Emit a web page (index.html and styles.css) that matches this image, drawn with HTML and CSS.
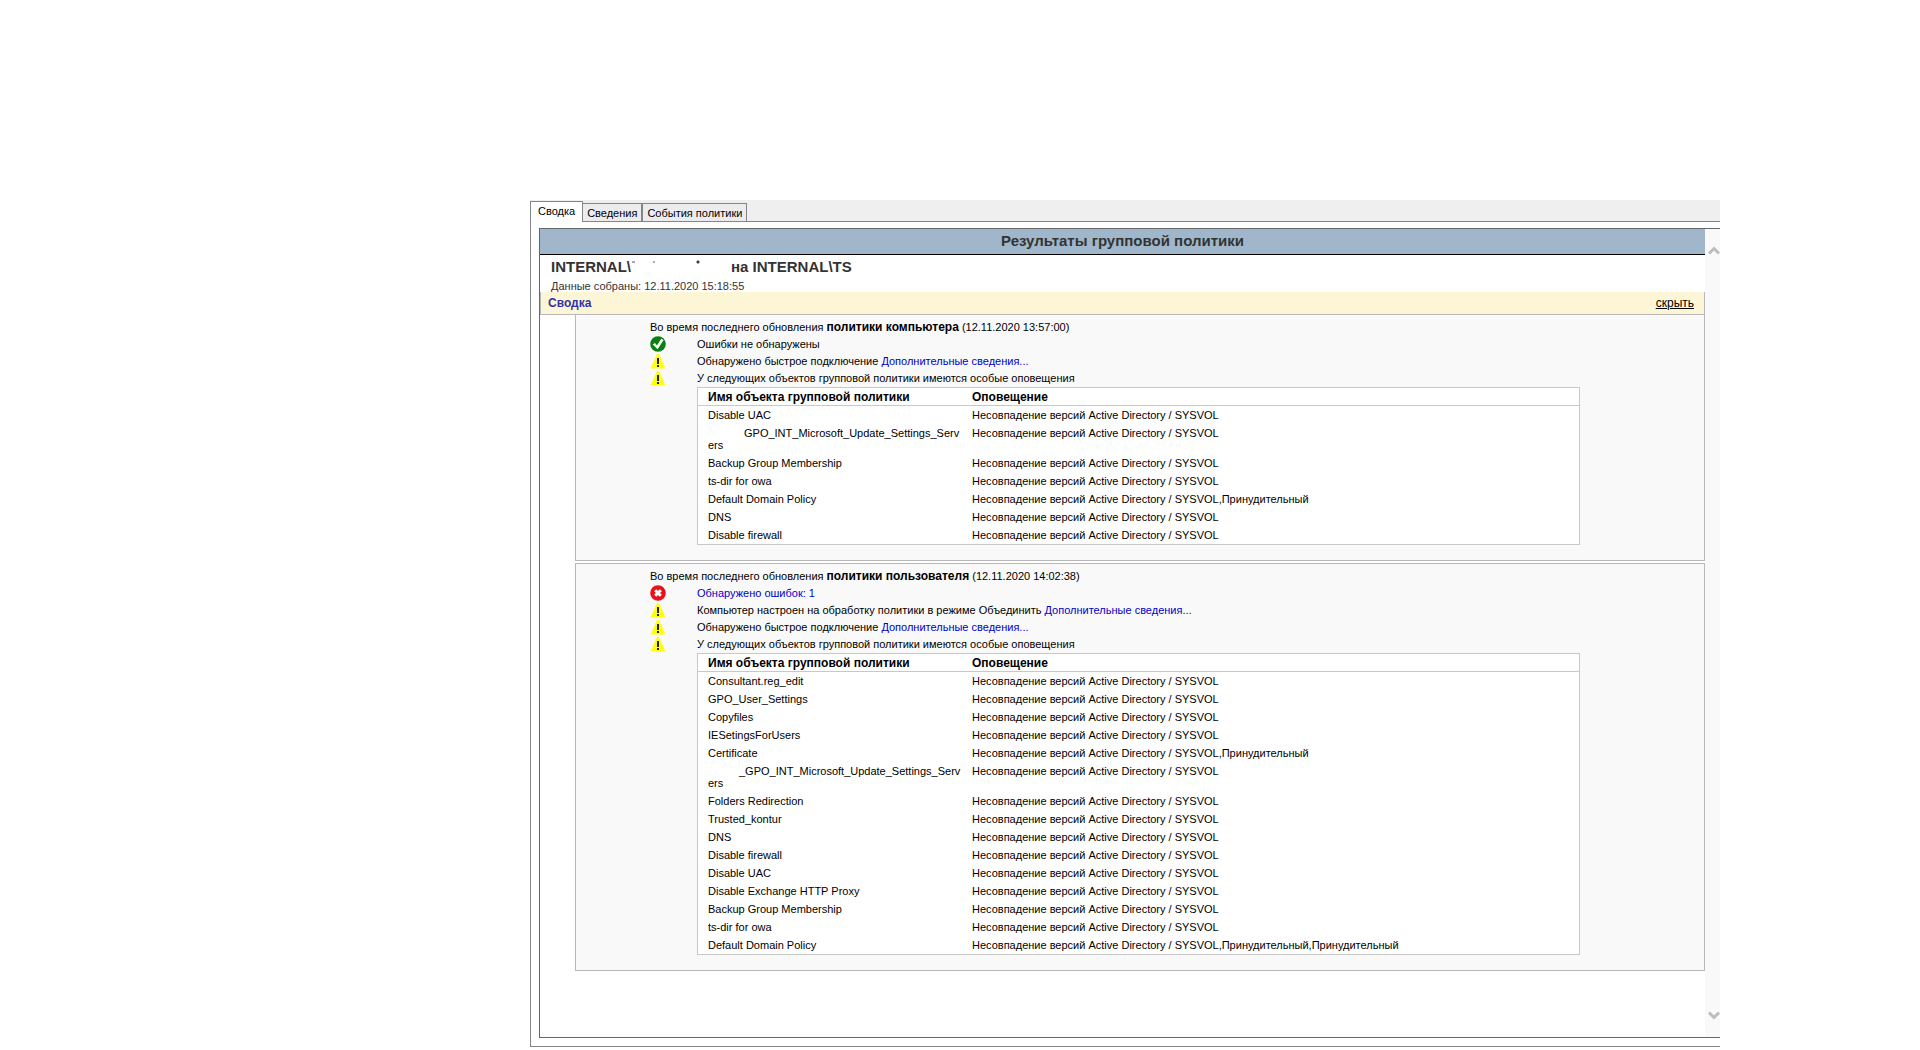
FILE: index.html
```html
<!DOCTYPE html>
<html lang="ru">
<head>
    <meta charset="UTF-8">
    <meta name="viewport" content="width=device-width, initial-scale=1.0">
    <title>Результаты групповой политики</title>
    <link rel="stylesheet" href="styles.css">
</head>
<body>
    <!-- Иконки -->
    <svg class="sprite" aria-hidden="true">
        <symbol id="icon-ok" viewBox="0 0 16 16">
            <circle cx="8" cy="8" r="7.8" fill="#0a7f14"/>
            <path d="M2.8 8.6 5 7 7 9.4 11.2 2.8 13.6 4 7.6 13.2Z" fill="#fff"/>
        </symbol>
        <symbol id="icon-error" viewBox="0 0 16 16">
            <circle cx="8" cy="8" r="7.8" fill="#e8121a"/>
            <path d="M5.2 5.2 10.8 10.8M10.8 5.2 5.2 10.8" stroke="#fff" stroke-width="3"/>
        </symbol>
        <symbol id="icon-warning" viewBox="0 0 16 16">
            <path d="M7 1h2l6.5 14.5H.5Z" fill="#ffff10"/>
            <path d="M7 5h2v6H7ZM7 12h2v2H7Z" fill="#222"/>
        </symbol>
    </svg>

    <main class="window">
        <nav class="tabs">
            <button class="tab active" type="button">Сводка</button>
            <button class="tab" type="button">Сведения</button>
            <button class="tab" type="button">События политики</button>
        </nav>
        <div class="tab-page">
            <div class="frame">
                <div class="report">
                    <h1 class="title">Результаты групповой политики</h1>
                    <div class="target">
                        <h2>INTERNAL\<svg class="hidden-user" viewBox="0 0 100 14" aria-hidden="true"><path d="M1 4h3M22 4h2M66 3h2v2h-2z" stroke="#555" stroke-width="1"/></svg>на INTERNAL\TS</h2>
                        <p>Данные собраны: 12.11.2020 15:18:55</p>
                    </div>
                    <div class="summary-bar">
                        <h3>Сводка</h3>
                        <a href="#">скрыть</a>
                    </div>

                    <section class="section">
                        <p>Во время последнего обновления <b>политики компьютера</b> (12.11.2020 13:57:00)</p>
                        <ul class="statuses">
                            <li><svg><use href="#icon-ok"/></svg><span>Ошибки не обнаружены</span></li>
                            <li><svg><use href="#icon-warning"/></svg><span>Обнаружено быстрое подключение <a href="#">Дополнительные сведения...</a></span></li>
                            <li><svg><use href="#icon-warning"/></svg><span>У следующих объектов групповой политики имеются особые оповещения</span></li>
                        </ul>
                        <table class="alerts">
                            <thead>
                                <tr><th scope="col">Имя объекта групповой политики</th><th scope="col">Оповещение</th></tr>
                            </thead>
                            <tbody>
                                <tr><td>Disable UAC</td><td>Несовпадение версий Active Directory / SYSVOL</td></tr>
                                <tr><td><span class="hidden-prefix"></span>GPO_INT_Microsoft_Update_Settings_Serv<br>ers</td><td>Несовпадение версий Active Directory / SYSVOL</td></tr>
                                <tr><td>Backup Group Membership</td><td>Несовпадение версий Active Directory / SYSVOL</td></tr>
                                <tr><td>ts-dir for owa</td><td>Несовпадение версий Active Directory / SYSVOL</td></tr>
                                <tr><td>Default Domain Policy</td><td>Несовпадение версий Active Directory / SYSVOL,Принудительный</td></tr>
                                <tr><td>DNS</td><td>Несовпадение версий Active Directory / SYSVOL</td></tr>
                                <tr><td>Disable firewall</td><td>Несовпадение версий Active Directory / SYSVOL</td></tr>
                            </tbody>
                        </table>
                    </section>

                    <section class="section">
                        <p>Во время последнего обновления <b>политики пользователя</b> (12.11.2020 14:02:38)</p>
                        <ul class="statuses">
                            <li><svg><use href="#icon-error"/></svg><a href="#">Обнаружено ошибок: 1</a></li>
                            <li><svg><use href="#icon-warning"/></svg><span>Компьютер настроен на обработку политики в режиме Объединить <a href="#">Дополнительные сведения...</a></span></li>
                            <li><svg><use href="#icon-warning"/></svg><span>Обнаружено быстрое подключение <a href="#">Дополнительные сведения...</a></span></li>
                            <li><svg><use href="#icon-warning"/></svg><span>У следующих объектов групповой политики имеются особые оповещения</span></li>
                        </ul>
                        <table class="alerts">
                            <thead>
                                <tr><th scope="col">Имя объекта групповой политики</th><th scope="col">Оповещение</th></tr>
                            </thead>
                            <tbody>
                                <tr><td>Consultant.reg_edit</td><td>Несовпадение версий Active Directory / SYSVOL</td></tr>
                                <tr><td>GPO_User_Settings</td><td>Несовпадение версий Active Directory / SYSVOL</td></tr>
                                <tr><td>Copyfiles</td><td>Несовпадение версий Active Directory / SYSVOL</td></tr>
                                <tr><td>IESetingsForUsers</td><td>Несовпадение версий Active Directory / SYSVOL</td></tr>
                                <tr><td>Certificate</td><td>Несовпадение версий Active Directory / SYSVOL,Принудительный</td></tr>
                                <tr><td><span class="hidden-prefix short"></span>_GPO_INT_Microsoft_Update_Settings_Serv<br>ers</td><td>Несовпадение версий Active Directory / SYSVOL</td></tr>
                                <tr><td>Folders Redirection</td><td>Несовпадение версий Active Directory / SYSVOL</td></tr>
                                <tr><td>Trusted_kontur</td><td>Несовпадение версий Active Directory / SYSVOL</td></tr>
                                <tr><td>DNS</td><td>Несовпадение версий Active Directory / SYSVOL</td></tr>
                                <tr><td>Disable firewall</td><td>Несовпадение версий Active Directory / SYSVOL</td></tr>
                                <tr><td>Disable UAC</td><td>Несовпадение версий Active Directory / SYSVOL</td></tr>
                                <tr><td>Disable Exchange HTTP Proxy</td><td>Несовпадение версий Active Directory / SYSVOL</td></tr>
                                <tr><td>Backup Group Membership</td><td>Несовпадение версий Active Directory / SYSVOL</td></tr>
                                <tr><td>ts-dir for owa</td><td>Несовпадение версий Active Directory / SYSVOL</td></tr>
                                <tr><td>Default Domain Policy</td><td>Несовпадение версий Active Directory / SYSVOL,Принудительный,Принудительный</td></tr>
                            </tbody>
                        </table>
                    </section>
                </div>
                <div class="scrollbar">
                    <button type="button" aria-label="Вверх"><svg viewBox="0 0 12 9"><path d="M1 7.5 6 2.5 11 7.5"/></svg></button>
                    <button type="button" aria-label="Вниз"><svg viewBox="0 0 12 9"><path d="M1 1.5 6 6.5 11 1.5"/></svg></button>
                </div>
            </div>
        </div>
    </main>
</body>
</html>
```
FILE: styles.css
```css
* {
    box-sizing: border-box;
}

body {
    margin: 0;
    background-color: #fff;
    color: #000;
    font-family: "Liberation Sans", Arial, sans-serif;
    font-size: 11px;
}

h1, h2, h3, p, ul {
    margin: 0;
    padding: 0;
}

button {
    font: inherit;
    color: inherit;
    cursor: pointer;
}

a {
    color: #0000c8;
    text-decoration: none;
}

.sprite {
    display: none;
}

.window {
    margin: 200px 200px 0 530px;
}

/* Вкладки */
.tabs {
    display: flex;
    align-items: flex-end;
    height: 22px;
    background-color: #efefef;
    border-bottom: 1px solid #838589;
}

.tab {
    height: 18px;
    padding: 1px 4px 0;
    border: 1px solid #838589;
    border-left-width: 0;
    border-bottom: none;
    background-color: #ececee;
    white-space: nowrap;
}

.tab:last-child {
    border-left-width: 1px;
}

.tab.active {
    height: 21px;
    margin-bottom: -1px;
    padding: 0 7px 3px;
    border-left-width: 1px;
    background-color: #fff;
}

.tab-page {
    padding: 6px 0 8px 8px;
    border-left: 1px solid #838589;
    border-bottom: 1px solid #838589;
}

.frame {
    display: flex;
    border: 1px solid #65676b;
    border-right: none;
}

.report {
    flex: 1;
    padding-bottom: 66px;
}

.title {
    height: 26px;
    border-bottom: 1px solid #000;
    background-color: #a0b7cb;
    color: #333;
    font-size: 15px;
    line-height: 24px;
    text-align: center;
}

.target {
    height: 37px;
    padding: 3px 11px 0;
    color: #333;
}

.target h2 {
    font-size: 15px;
    line-height: 18px;
}

.target p {
    line-height: 20px;
}

.hidden-user {
    width: 100px;
    height: 14px;
}

.summary-bar {
    display: flex;
    justify-content: space-between;
    align-items: center;
    height: 23px;
    padding: 0 10px 0 7px;
    border: 1px solid #b8b8b8;
    border-top: none;
    background-color: #fdf6d6;
    font-size: 12px;
}

.summary-bar h3 {
    color: #3333a8;
    font-size: 12px;
}

.summary-bar a {
    color: #000;
    text-decoration: underline;
}

/* Разделы отчёта */
.section {
    margin: 0 0 2px 35px;
    padding: 4px 124px 15px 74px;
    border: 1px solid #b8b8b8;
    background-color: #f9f9f9;
    line-height: 17px;
}

.section:last-child {
    margin-bottom: 0;
}

.summary-bar + .section {
    border-top: none;
}

.section p {
    height: 17px;
}

.section b {
    font-size: 12px;
}

.statuses {
    list-style: none;
}

.statuses li {
    display: flex;
    gap: 31px;
    height: 17px;
}

.statuses svg {
    width: 16px;
    height: 16px;
}

.alerts {
    width: calc(100% - 47px);
    margin-left: 47px;
    border: 1px solid #c8c8c8;
    border-spacing: 0;
    table-layout: fixed;
    background-color: #fff;
    line-height: 12px;
}

.alerts th,
.alerts td {
    padding: 3px 0 3px 10px;
    text-align: left;
    vertical-align: top;
    white-space: nowrap;
}

.alerts th {
    border-bottom: 1px solid #c8c8c8;
    padding-bottom: 2px;
    font-size: 12px;
}

.alerts th:first-child {
    width: 264px;
}

.hidden-prefix {
    display: inline-block;
    width: 36px;
}

.hidden-prefix.short {
    width: 31px;
}

/* Полоса прокрутки */
.scrollbar {
    display: flex;
    flex-direction: column;
    justify-content: space-between;
    width: 15px;
    padding: 16px 0;
    background-color: #f9f9f9;
}

.scrollbar button {
    height: 11px;
    padding: 0 0 0 3px;
    border: none;
    background: none;
}

.scrollbar svg {
    display: block;
    width: 12px;
    height: 9px;
    fill: none;
    stroke: #bcbcbc;
    stroke-width: 3;
}
```
